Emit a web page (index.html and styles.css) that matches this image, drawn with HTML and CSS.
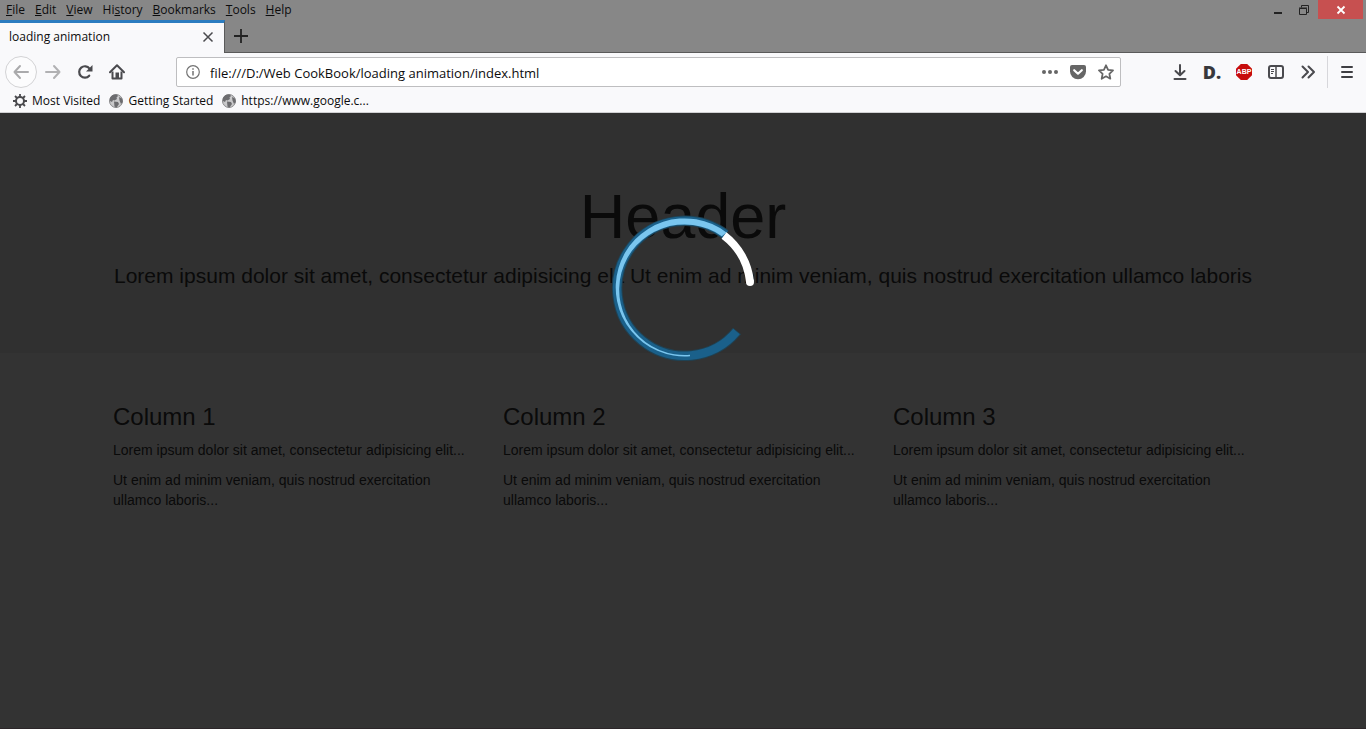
FILE: index.html
```html
<!DOCTYPE html>
<html lang="en">
<head>
<meta charset="utf-8">
<title>loading animation</title>
<link rel="stylesheet" href="styles.css">
</head>
<body>
<div class="browser">
  <header class="chrome">
    <div class="titlebar">
      <nav class="menu" aria-label="Menu">
        <button><u>F</u>ile</button>
        <button><u>E</u>dit</button>
        <button><u>V</u>iew</button>
        <button>Hi<u>s</u>tory</button>
        <button><u>B</u>ookmarks</button>
        <button><u>T</u>ools</button>
        <button><u>H</u>elp</button>
      </nav>
      <div class="window-buttons">
        <button class="win" aria-label="Minimize"><svg width="12" height="12"><path d="M1 9h8" stroke="#222" stroke-width="2"/></svg></button>
        <button class="win" aria-label="Restore"><svg width="12" height="12" fill="none" stroke="#222"><path d="M.500 4.500h7v6h-7zM0 4h8M2.500 3.500v-2h7v7h-2"/></svg></button>
        <button class="win win-close" aria-label="Close"><svg width="10" height="10"><path d="M1.500 1.500l7 7M8.500 1.500l-7 7" stroke="#fff" stroke-width="1.800"/></svg></button>
      </div>
    </div>
    <div class="tabs">
      <div class="tab">
        <span>loading animation</span>
        <button class="tab-close" aria-label="Close tab"><svg width="12" height="12"><path d="M1.500 1.500l9 9M10.500 1.500l-9 9" stroke="#4a4a4e" stroke-width="1.500"/></svg></button>
      </div>
      <button class="new-tab" aria-label="New tab"><svg width="14" height="14"><path d="M7 0v14M0 7h14" stroke="#222" stroke-width="1.800"/></svg></button>
    </div>
    <div class="toolbar">
      <div class="nav-buttons">
        <button class="icon back" aria-label="Back"><svg width="16" height="16" fill="none" stroke="#aaaaac" stroke-width="2" stroke-linecap="round" stroke-linejoin="round"><path d="M15 8H1.500M7 2L1.500 8L7 14"/></svg></button>
        <button class="icon" aria-label="Forward"><svg width="16" height="16" fill="none" stroke="#b1b1b3" stroke-width="2" stroke-linecap="round" stroke-linejoin="round"><path d="M1 8h13.500M9 2l5.500 6L9 14"/></svg></button>
        <button class="icon" aria-label="Reload"><svg width="16" height="16"><path d="M12.200 11.700A5.700 5.700 0 1 1 12.500 4.600" fill="none" stroke="#4a4a4e" stroke-width="2.200" stroke-linecap="round"/><path d="M15.500 1v6.500H9z" fill="#4a4a4e"/></svg></button>
        <button class="icon" aria-label="Home"><svg width="16" height="16"><path d="M1 8.200L8 1.300l7 6.900" fill="none" stroke="#4a4a4e" stroke-width="2" stroke-linecap="round" stroke-linejoin="round"/><path d="M3.500 7.500v7h9v-7" fill="none" stroke="#4a4a4e" stroke-width="2" stroke-linejoin="round"/><path d="M6.500 8.500h3.500V14H6.500z" fill="#4a4a4e"/></svg></button>
      </div>
      <div class="urlbar">
        <svg width="14" height="14"><circle cx="7" cy="7" r="6.300" fill="none" stroke="#737373" stroke-width="1.200"/><path d="M7 6v4.500M7 3.300v1.500" stroke="#737373" stroke-width="1.500"/></svg>
        <input type="text" aria-label="Address" value="file:///D:/Web CookBook/loading animation/index.html">
        <button class="page-action" aria-label="Page actions"><svg width="16" height="16" fill="#666"><circle cx="2" cy="8" r="2"/><circle cx="8" cy="8" r="2"/><circle cx="14" cy="8" r="2"/></svg></button>
        <button class="page-action" aria-label="Save to Pocket"><svg width="16" height="16"><path d="M2 1h12q2 0 2 2v4.500a8 7.800 0 0 1-16 0V3q0-2 2-2z" fill="#666"/><path d="M4.200 6.200L8 9.700l3.800-3.500" fill="none" stroke="#fff" stroke-width="2.200" stroke-linecap="round" stroke-linejoin="round"/></svg></button>
        <button class="page-action" aria-label="Bookmark this page"><svg width="16" height="16"><path d="M8 1.300l2.100 4.500 4.900.6-3.600 3.400.9 4.900L8 12.300l-4.300 2.400.9-4.900L1 6.400l4.900-.6z" fill="none" stroke="#666" stroke-width="1.800" stroke-linejoin="round"/></svg></button>
      </div>
      <div class="tools">
        <button class="icon" aria-label="Downloads"><svg width="16" height="16" fill="none" stroke="#4a4a4e" stroke-width="2" stroke-linecap="round" stroke-linejoin="round"><path d="M8 1v10M3.500 7L8 11.300 12.500 7M2.500 15h11"/></svg></button>
        <button class="icon dashlane" aria-label="Dashlane">D.</button>
        <button class="icon" aria-label="Adblock Plus"><span class="abp">ABP</span></button>
        <button class="icon" aria-label="Sidebars"><svg width="16" height="16" fill="none" stroke="#4a4a4e"><rect x="1" y="2" width="14" height="12" rx="2" stroke-width="2"/><path d="M8 2v12" stroke-width="1.500"/><path d="M3 5.500h3M3 7.500h3M3 9.500h2"/></svg></button>
        <button class="icon" aria-label="More tools"><svg width="16" height="16" fill="none" stroke="#4a4a4e" stroke-width="2" stroke-linecap="round" stroke-linejoin="round"><path d="M2.500 2.500L8 8l-5.500 5.500M8.500 2.500L14 8l-5.500 5.500"/></svg></button>
      </div>
      <button class="app-menu" aria-label="Open menu"><svg width="14" height="14" stroke="#3f3f43" stroke-width="2" stroke-linecap="round"><path d="M2 2h10M2 7h10M2 12h10"/></svg></button>
    </div>
    <nav class="bookmarks" aria-label="Bookmarks">
      <a href="#"><svg width="14" height="14" fill="none" stroke="#4a4a4e"><circle cx="7" cy="7" r="4" stroke-width="2"/><path d="M7 0v3M7 11v3M0 7h3M11 7h3M2 2l2 2M10 10l2 2M2 12l2-2M10 4l2-2" stroke-width="1.800"/></svg>Most Visited</a>
      <a href="#"><svg width="14" height="14"><circle cx="7" cy="7" r="6.500" fill="#c9c9cb" stroke="#88888a"/><path d="M1 4Q3 0 8 .7L9 2 7.500 3.500 8 5 5.500 6.500 4 6 3 8 1 7zM5 7.500l4 .5 1 2-2.500 3.500-2-1zM10 3l3 1.500.8 3.500-1.800 2-1.500-3.500z" fill="#6c6c6f"/></svg>Getting Started</a>
      <a href="#"><svg width="14" height="14"><circle cx="7" cy="7" r="6.500" fill="#c9c9cb" stroke="#88888a"/><path d="M1 4Q3 0 8 .7L9 2 7.500 3.500 8 5 5.500 6.500 4 6 3 8 1 7zM5 7.500l4 .5 1 2-2.500 3.500-2-1zM10 3l3 1.500.8 3.500-1.800 2-1.500-3.500z" fill="#6c6c6f"/></svg>https://www.google.c...</a>
    </nav>
  </header>
  <main class="page">
    <section class="jumbotron">
      <h1>Header</h1>
      <p>Lorem ipsum dolor sit amet, consectetur adipisicing elit Ut enim ad minim veniam, quis nostrud exercitation ullamco laboris</p>
    </section>
    <div class="container">
      <section class="column">
        <h3>Column 1</h3>
        <p>Lorem ipsum dolor sit amet, consectetur adipisicing elit...</p>
        <p>Ut enim ad minim veniam, quis nostrud exercitation ullamco laboris...</p>
      </section>
      <section class="column">
        <h3>Column 2</h3>
        <p>Lorem ipsum dolor sit amet, consectetur adipisicing elit...</p>
        <p>Ut enim ad minim veniam, quis nostrud exercitation ullamco laboris...</p>
      </section>
      <section class="column">
        <h3>Column 3</h3>
        <p>Lorem ipsum dolor sit amet, consectetur adipisicing elit...</p>
        <p>Ut enim ad minim veniam, quis nostrud exercitation ullamco laboris...</p>
      </section>
    </div>
    <div class="overlay" role="status" aria-label="Loading">
      <svg width="150" height="150" fill="none">
        <path d="M129 118A67.500 67.500 0 1 1 117.500 21.500" stroke="#1f4254" stroke-width="10.500"/>
        <path d="M128.500 118.500A67.500 67.500 0 1 1 117.500 21.500" stroke="#1a608a" stroke-width="8.500"/>
        <path d="M118.500 19.500A69 69 0 1 0 82 143.200L82 141.700A65.250 65.250 0 1 1 113.800 23.200z" fill="#7ac6ef"/>
        <path d="M116 22.500A67 67 0 0 1 142 69" stroke="#fff" stroke-width="8"/>
        <circle cx="142" cy="69" r="4" fill="#fff"/>
      </svg>
    </div>
  </main>
</div>
</body>
</html>
```
FILE: styles.css
```css
* { box-sizing: border-box; }
body { margin: 0; }
button { border: 0; padding: 0; background: none; font: inherit; color: inherit; }
svg { display: block; flex: none; }

.browser { display: flex; flex-direction: column; min-height: 100vh; }
.chrome {
  background: #f9f9fb;
  border-bottom: 1px solid #d0d0d2;
  color: #0c0c0d;
  font: 12px/16px "Open Sans", "Noto Sans", sans-serif;
}

.titlebar { display: flex; justify-content: space-between; height: 20px; background: #878787; }
.menu { display: flex; align-items: center; gap: 10px; padding-left: 6px; }
.menu u { text-underline-offset: 1px; }
.window-buttons { display: flex; padding-right: 3px; }
.win { display: flex; align-items: center; justify-content: center; width: 26px; height: 19px; }
.win-close { width: 45px; background: #c75050; }

.tabs { display: flex; height: 33px; background: #878787; }
.tab {
  display: flex; align-items: center; justify-content: space-between;
  width: 225px; padding: 0 10px 2px 9px;
  background: #f9f9fb; border-top: 3px solid #2b7cc0; border-right: 1px solid #5a5a5a;
}
.new-tab { display: flex; flex: 1; align-items: center; padding-left: 9px; border-bottom: 1px solid #5a5a5a; }

.toolbar { display: flex; align-items: center; height: 38px; padding-left: 5px; }
.nav-buttons { display: flex; width: 171px; }
.icon { display: flex; align-items: center; justify-content: center; width: 32px; height: 32px; }
.back { border: 1px solid #d3d3d5; border-radius: 50%; background: #fcfcfd; }
.urlbar {
  display: flex; align-items: center; flex: 1; height: 30px; padding: 0 0 0 9px;
  background: #fff; border: 1px solid #bebec0; border-radius: 2px;
}
.urlbar input {
  flex: 1; min-width: 0; border: 0; padding: 2px 0 0 10px; background: none; color: #0c0c0d;
  font: 13px/20px "Open Sans", "Noto Sans", sans-serif; outline: 0;
}
.page-action { display: flex; justify-content: center; width: 28px; }
.tools { display: flex; padding: 0 3px 0 43px; }
.dashlane { color: #38383c; font-size: 18px; font-weight: 800; }
.abp {
  display: flex; align-items: center; justify-content: center; width: 16px; height: 16px;
  background: #c70d0d; color: #fff; font: bold 7px/16px "Liberation Sans", sans-serif;
  clip-path: polygon(30% 0, 70% 0, 100% 30%, 100% 70%, 70% 100%, 30% 100%, 0 70%, 0 30%);
}
.app-menu {
  display: flex; align-items: center; justify-content: center;
  width: 39px; height: 32px; border-left: 1px solid #d7d7db;
}

.bookmarks { display: flex; align-items: center; gap: 9px; height: 21px; padding: 0 13px 1px; }
.bookmarks a { display: flex; align-items: center; gap: 5px; color: inherit; text-decoration: none; }

.page {
  position: relative; flex: 1; background: #fff; color: #333;
  font: 14px/20px "Liberation Sans", Arial, sans-serif;
}
.jumbotron { margin-bottom: 30px; padding: 49px 15px 47px; background: #eee; text-align: center; overflow: hidden; }
.jumbotron h1 { margin: 20px 0 10px; font-size: 63px; font-weight: 500; line-height: 69px; }
.jumbotron p { margin: 0 0 15px; font-size: 21px; line-height: 30px; }
.container { display: grid; grid-template-columns: repeat(3, 1fr); max-width: 1170px; margin: 0 auto; }
.column { padding: 1px 15px 0; }
.column h3 { margin: 20px 0 10px; font-size: 24px; font-weight: 500; line-height: 26px; }
.column p { margin: 0 0 10px; }
.overlay {
  position: absolute; inset: 0; display: flex; align-items: flex-start; justify-content: center;
  padding-top: 100px; background: rgba(0, 0, 0, .8); border-bottom: 1px solid rgba(30, 10, 20, .3);
}
```
